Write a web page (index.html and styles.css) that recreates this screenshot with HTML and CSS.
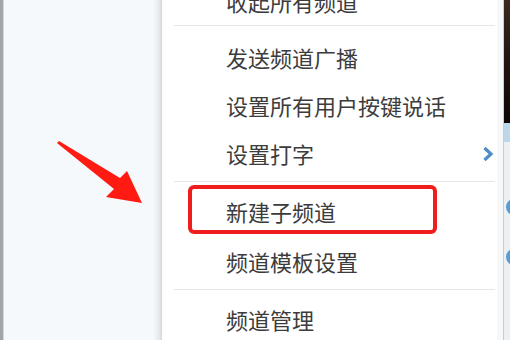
FILE: index.html
```html
<!DOCTYPE html>
<html lang="zh-CN">
<head>
<meta charset="utf-8">
<title>频道菜单</title>
<link rel="stylesheet" href="styles.css">
</head>
<body>
<div class="screen">
  <div class="side"></div>
  <div class="menu">
    <div class="item cut">收起所有频道</div>
    <div class="sep sep-a"></div>
    <div class="item">发送频道广播</div>
    <div class="item">设置所有用户按键说话</div>
    <div class="item sub">设置打字
      <svg class="chev" width="12" height="16" viewBox="0 0 12 16"><polyline points="2.5,2 9,8 2.5,14" fill="none" stroke="#4d8ec8" stroke-width="3.2"/></svg>
    </div>
    <div class="sep sep-b"></div>
    <div class="item tall marked">新建子频道<span class="mark"></span></div>
    <div class="item tall">频道模板设置</div>
    <div class="sep sep-c"></div>
    <div class="item">频道管理</div>
  </div>
  <div class="edge">
    <div class="edge-dark"></div>
    <div class="edge-blue"></div>
    <div class="edge-list">
      <span class="dot"></span>
      <span class="dot"></span>
    </div>
  </div>
  <svg class="arrow" width="510" height="340" viewBox="0 0 510 340">
    <polygon points="57,143 59,141 120,178 127,171 142,203 106,197 114,189" fill="#ff1a12"/>
  </svg>
</div>
</body>
</html>
```

FILE: styles.css
```css
html, body {
  margin: 0;
  padding: 0;
  background: #ffffff;
}

.screen {
  position: relative;
  width: 510px;
  height: 340px;
  overflow: hidden;
  display: flex;
  font-family: "Noto Sans CJK SC", "Noto Sans", sans-serif;
}

.side {
  width: 159px;
  flex: none;
  border-left: 3px solid #a3a6a9;
  box-shadow: inset 1px 0 0 #d5d8da;
  background: linear-gradient(to right, #f5f9fc 0, #f5f9fc 150px, #e6eaed 156px, #d3d7da 159px);
}

.menu {
  width: 335px;
  flex: none;
  background: #ffffff;
  display: flex;
  flex-direction: column;
  border-right: 6px solid #f6f7f8;
}

.item {
  position: relative;
  height: 48px;
  flex: none;
  display: flex;
  align-items: center;
  padding-left: 64px;
  font-size: 22px;
  color: #3c3c3c;
  white-space: nowrap;
}

.item.cut {
  height: 24px;
  margin-top: -11px;
}

.item.tall {
  height: 50px;
}

.sep {
  flex: none;
  height: 1px;
  margin-left: 12px;
  margin-right: 2px;
  background: #e4e7ea;
}

.sep-a {
  margin-top: 12px;
  margin-bottom: 7px;
}

.sep-b {
  margin-top: 4px;
  margin-bottom: 4px;
}

.sep-c {
  margin-top: 3px;
  margin-bottom: 5px;
}

.chev {
  position: absolute;
  left: 320px;
  top: 17px;
}

.mark {
  position: absolute;
  left: 26px;
  top: -1px;
  width: 241px;
  height: 41px;
  border: 4px solid #f01d1d;
  border-radius: 6px;
}

.edge {
  flex: 1;
  display: flex;
  flex-direction: column;
  border-left: 1px solid #c9cbcd;
}

.edge-dark {
  height: 123px;
  flex: none;
  background: linear-gradient(to bottom, #3a2822, #1b100c 60%, #0c0605);
}

.edge-blue {
  height: 19px;
  flex: none;
  background: #bcd6ec;
}

.edge-list {
  flex: 1;
  background: #edf0f2;
  display: flex;
  flex-direction: column;
  gap: 34px;
  padding-top: 57px;
  padding-left: 2px;
}

.dot {
  display: block;
  width: 16px;
  height: 16px;
  border-radius: 50%;
  background: #5a9bd1;
}

.arrow {
  position: absolute;
  left: 0;
  top: 0;
  pointer-events: none;
}
```
